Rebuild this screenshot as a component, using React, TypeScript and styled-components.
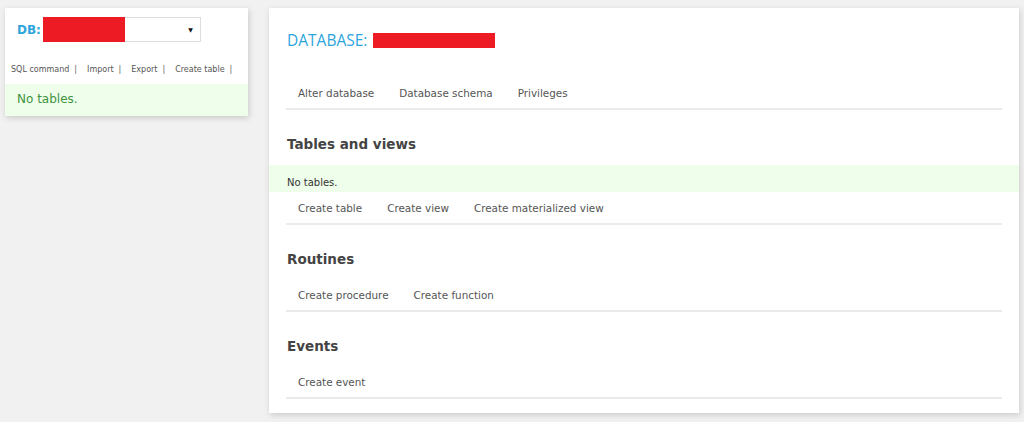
import React from 'react'
import styled, { createGlobalStyle } from 'styled-components'

const GlobalStyle = createGlobalStyle`
  html, body {
    margin: 0;
    padding: 0;
    background: #f1f1f1;
  }
  body {
    font-family: 'DejaVu Sans', Verdana, sans-serif;
    color: #555;
  }
`

const Page = styled.div`
  display: flex;
  align-items: flex-start;
  gap: 21px;
  padding: 8px 5px;
`

const Panel = styled.div`
  background: #fff;
  box-shadow: 1px 2px 6px rgba(0, 0, 0, 0.16);
`

const Sidebar = styled(Panel)`
  width: 243px;
  flex-shrink: 0;
`

const DbRow = styled.div`
  display: flex;
  align-items: center;
  gap: 2px;
  padding: 9px 0 0 12px;
`

const DbLabel = styled.span`
  color: #2da5dc;
  font-size: 12px;
  font-weight: bold;
`

const Select = styled.div`
  display: flex;
  align-items: stretch;
  width: 158px;
  height: 25px;
  box-sizing: border-box;
  border: 1px solid #ddd;
`

const Redacted = styled.span<{ w: number; h?: number }>`
  display: inline-block;
  width: ${p => p.w}px;
  height: ${p => (p.h ? `${p.h}px` : 'auto')};
  background: #ed1c24;
`

const SelectRedacted = styled(Redacted)`
  margin: -1px 0 -1px -1px;
`

const Arrow = styled.span`
  margin-left: auto;
  align-self: center;
  padding-right: 7px;
  font-size: 6px;
  color: #111;
`

const SideLinks = styled.div`
  display: flex;
  white-space: nowrap;
  padding: 22px 0 8px 6px;
  font-size: 8px;
  line-height: 12px;
  color: #555;
`

const SideLink = styled.span`
  flex-shrink: 0;
  &::after {
    content: '|';
    margin: 0 10px 0 5px;
    color: #666;
  }
`

const SideMessage = styled.div`
  background: #eefeea;
  color: #3f9341;
  font-size: 12px;
  line-height: 15px;
  padding: 8px 12px 9px;
`

const Main = styled(Panel)`
  width: 750px;
  flex-shrink: 0;
  padding-bottom: 14px;
`

const Title = styled.h2`
  display: flex;
  align-items: center;
  gap: 6px;
  margin: 0;
  padding: 22px 18px 27px;
  font-family: 'Open Sans', 'DejaVu Sans', sans-serif;
  font-weight: normal;
  font-size: 15.5px;
  line-height: 20px;
  color: #2da5dc;
  text-transform: uppercase;
`

const LinkRow = styled.div`
  display: flex;
  margin: 0 17px;
  padding: 8px 0 7px;
  line-height: 16px;
  font-size: 10.4px;
  border-bottom: 2px solid #ebebeb;
`

const NavLink = styled.span`
  padding: 0 13px 0 12px;
  color: #555;
`

const SectionTitle = styled.h3<{ first?: boolean }>`
  margin: 0;
  padding: 24px 18px ${p => (p.first ? 11 : 10)}px;
  font-size: 13.5px;
  line-height: 20px;
  font-weight: bold;
  color: #444;
`

const Message = styled.div`
  background: #eefeea;
  color: #333;
  font-size: 10px;
  line-height: 12px;
  padding: 12px 18px 3px;
`

const App: React.FC = () => (
  <>
    <GlobalStyle />
    <Page>
      <Sidebar>
        <DbRow>
          <DbLabel>DB:</DbLabel>
          <Select>
            <SelectRedacted w={82} />
            <Arrow>▼</Arrow>
          </Select>
        </DbRow>
        <SideLinks>
          <SideLink>SQL command</SideLink>
          <SideLink>Import</SideLink>
          <SideLink>Export</SideLink>
          <SideLink>Create table</SideLink>
        </SideLinks>
        <SideMessage>No tables.</SideMessage>
      </Sidebar>

      <Main>
        <Title>
          Database: <Redacted w={122} h={15} />
        </Title>
        <LinkRow>
          <NavLink>Alter database</NavLink>
          <NavLink>Database schema</NavLink>
          <NavLink>Privileges</NavLink>
        </LinkRow>

        <SectionTitle first>Tables and views</SectionTitle>
        <Message>No tables.</Message>
        <LinkRow>
          <NavLink>Create table</NavLink>
          <NavLink>Create view</NavLink>
          <NavLink>Create materialized view</NavLink>
        </LinkRow>

        <SectionTitle>Routines</SectionTitle>
        <LinkRow>
          <NavLink>Create procedure</NavLink>
          <NavLink>Create function</NavLink>
        </LinkRow>

        <SectionTitle>Events</SectionTitle>
        <LinkRow>
          <NavLink>Create event</NavLink>
        </LinkRow>
      </Main>
    </Page>
  </>
)

export default App
